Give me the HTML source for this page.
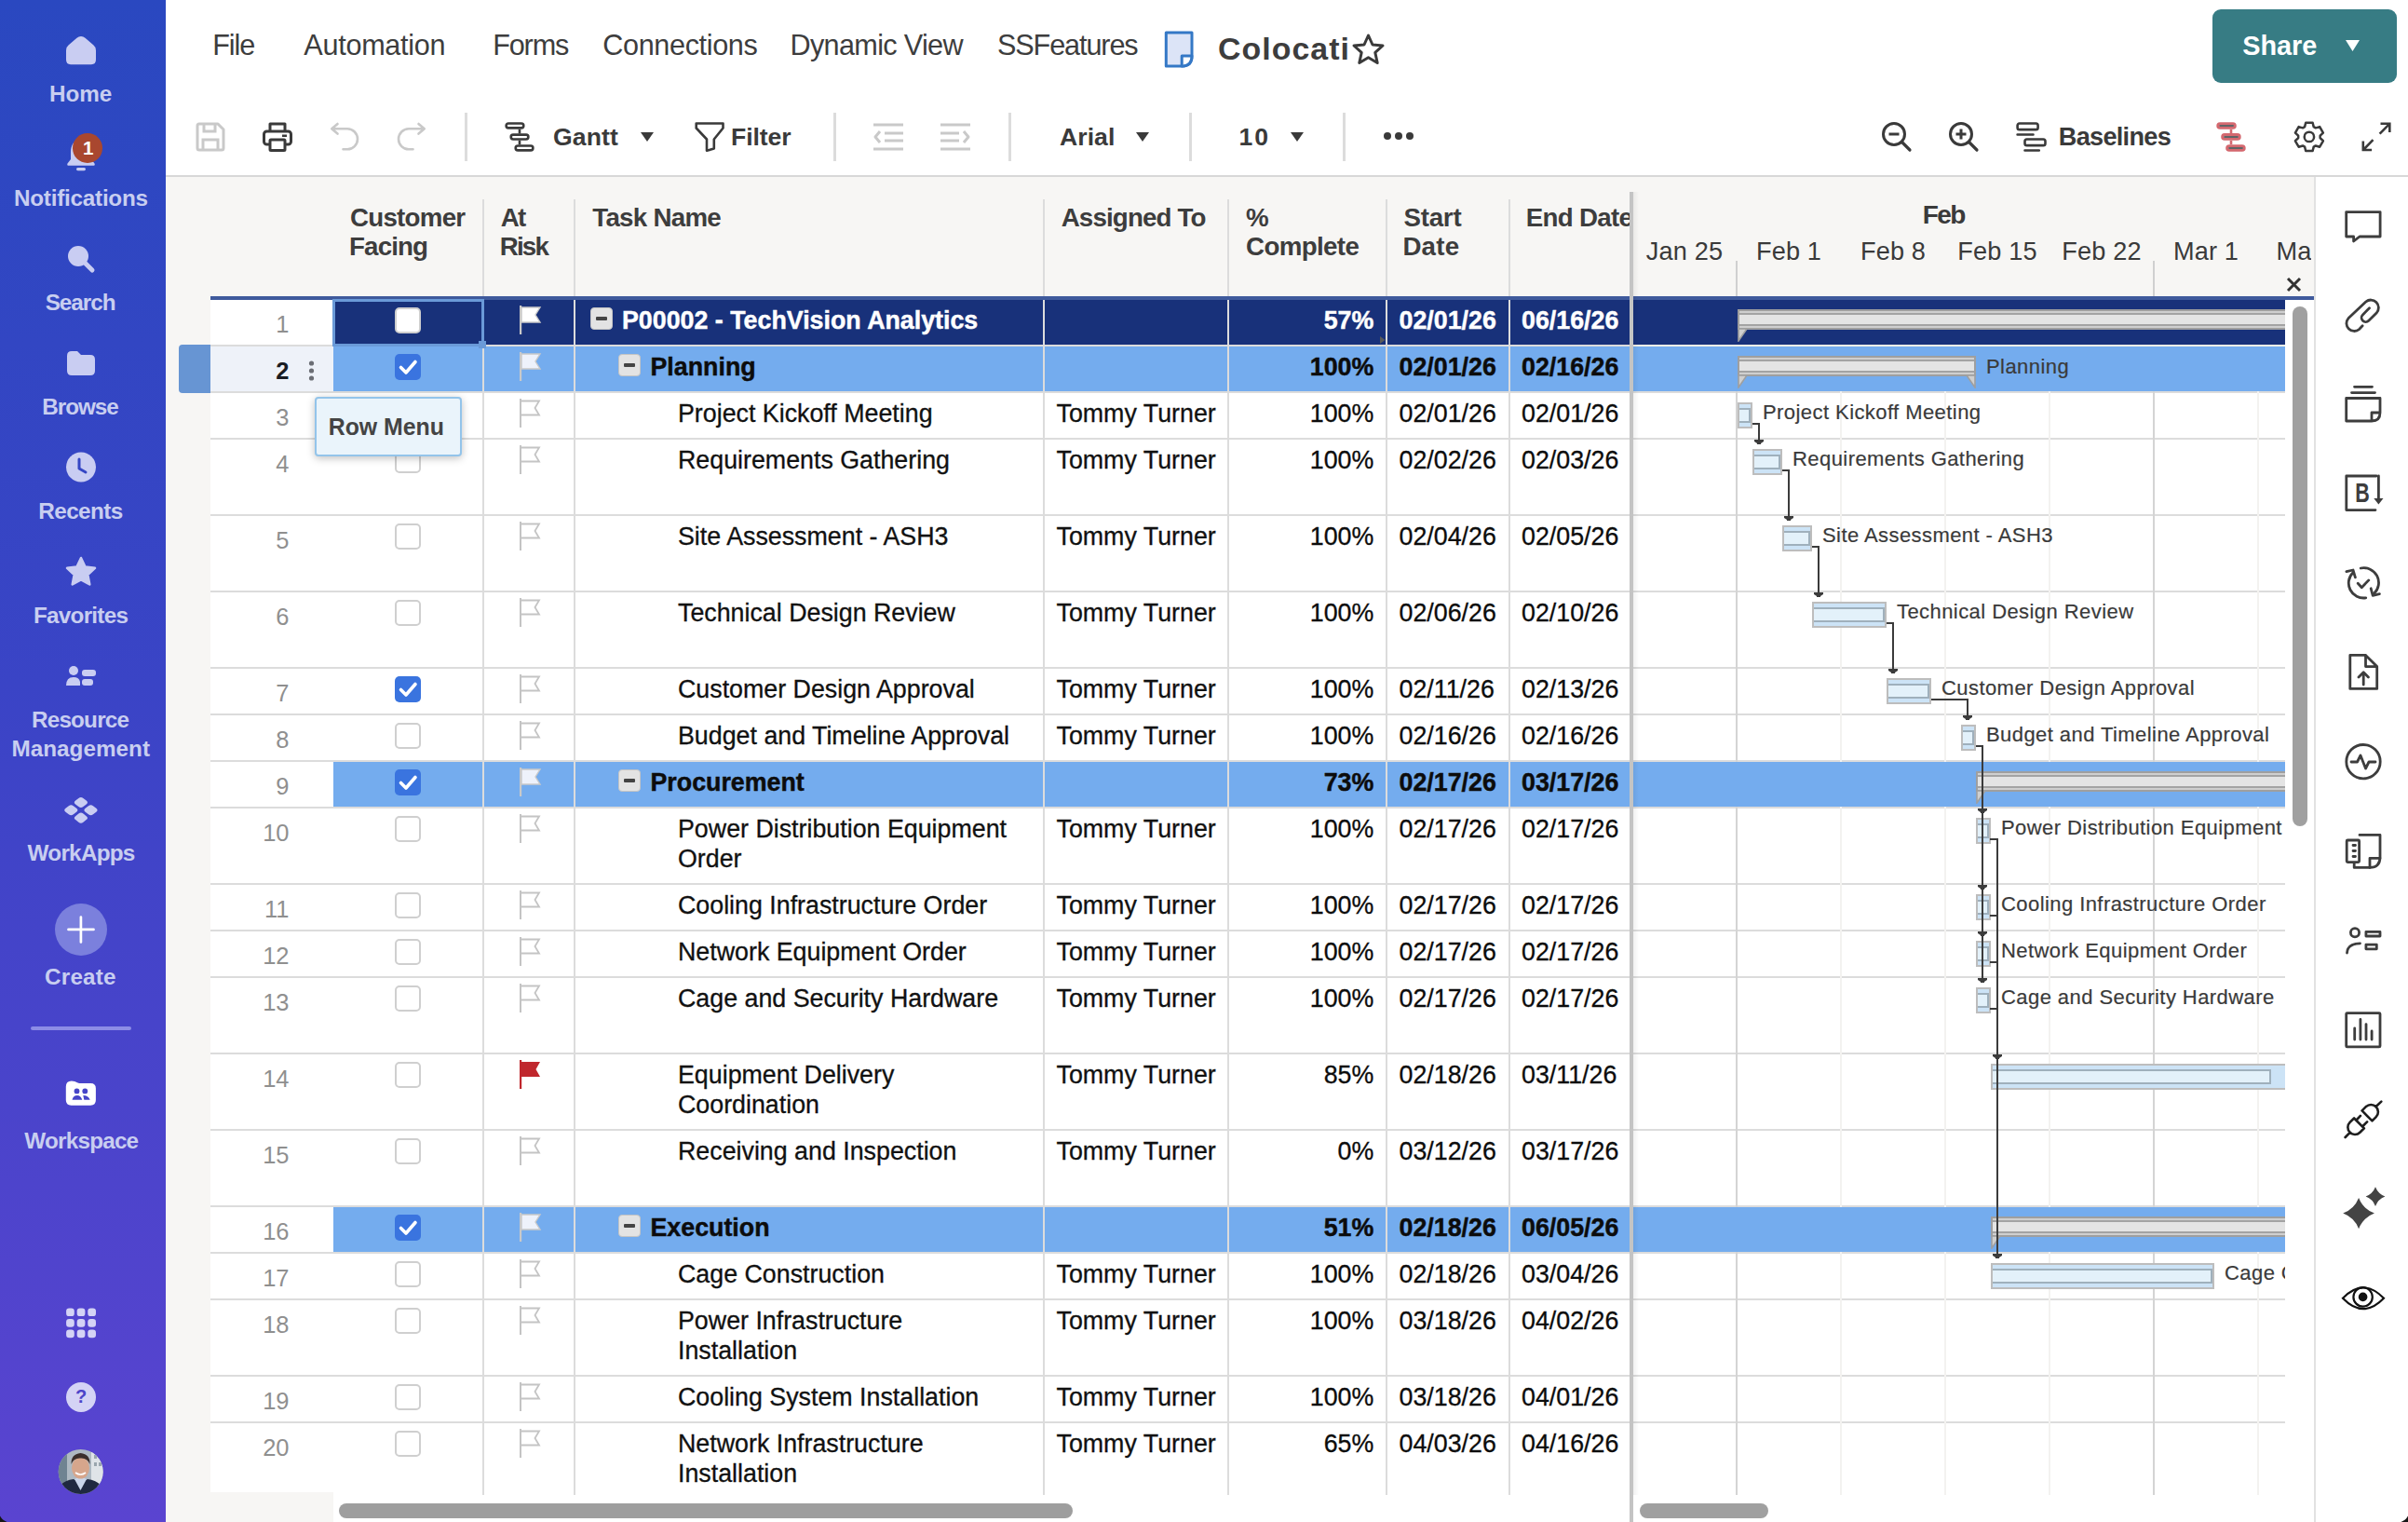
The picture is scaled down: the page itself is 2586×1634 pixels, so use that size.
<!DOCTYPE html><html><head><meta charset="utf-8"><style>
*{box-sizing:border-box;margin:0;padding:0}
html,body{width:2586px;height:1634px;overflow:hidden;background:#fff;font-family:"Liberation Sans", sans-serif;}
.a{position:absolute}
.t{position:absolute;white-space:nowrap;line-height:1}
.sb{position:absolute;left:0;width:178px;text-align:center;color:#c9cdf2;font-weight:bold;font-size:23px;line-height:31px}
.mn{position:absolute;top:34px;font-size:28px;color:#3a3a3a;white-space:nowrap;line-height:32px}
.tb{position:absolute;top:130px}
.sep{position:absolute;top:121px;width:3px;height:52px;background:#dcdcdc}
.hd{position:absolute;top:216px;font-size:26px;font-weight:bold;color:#3d3d3d;line-height:31px;white-space:nowrap}
.vl{position:absolute;width:2px;background:#dcdcdc}
.cell{-webkit-text-stroke:0.3px currentColor;position:absolute;font-size:26.8px;line-height:32px;white-space:nowrap;color:#111}
.rn{position:absolute;font-size:25.5px;color:#8f8f8f;text-align:right;width:80px;left:230.5px;line-height:30px}
.cb{position:absolute;left:424px;width:28px;height:28px;border:2px solid #cfcfcf;border-radius:5px;background:#fff}
.cbc{position:absolute;left:424px;width:28px;height:28px;border-radius:5px;background:#3a74df}
.tg{position:absolute;width:24px;height:24px;background:#e3e3e3;border:1.5px solid #c4c4c4;border-radius:4px}
.tg:after{content:"";position:absolute;left:4.5px;top:8.5px;width:12px;height:4px;background:#444;border-radius:1px}
.gl{-webkit-text-stroke:0.2px currentColor;position:absolute;font-size:22px;letter-spacing:0.43px;color:#3a3a3a;white-space:nowrap;line-height:26px}
.ri{position:absolute;left:2518px}

</style></head><body>
<div class="a" style="left:0;top:0;width:178px;height:1634px;background:linear-gradient(180deg,#2a48c0 0%,#3a44c6 45%,#5a44d0 100%)"></div>
<svg class="a" style="left:0;top:0" width="178" height="200" viewBox="0 0 178 200"><path d="M87 39 Q89.5 39 91.5 40.8 L100.5 48.5 Q103 50.5 103 54 V64 Q103 69.2 98 69.2 H76 Q71 69.2 71 64 V54 Q71 50.5 73.5 48.5 L82.5 40.8 Q84.5 39 87 39Z" fill="#c9cdf2"/><path d="M87 150 C79 150 76 156 76 164 V171 L72.5 175.5 Q71.5 177.8 74 177.8 H100 Q102.5 177.8 101.5 175.5 L98 171 V164 C98 156 95 150 87 150Z" fill="#c9cdf2"/><rect x="82" y="180" width="10" height="3.2" rx="1.6" fill="#c9cdf2"/></svg>
<div class="t" style="left:52.95px;top:89.1px;font-size:24.29px;line-height:24.29px;letter-spacing:-0.017px;font-weight:700;color:#c8cef0;">Home</div>
<div class="a" style="left:78.1px;top:143px;width:31.6px;height:31.6px;border-radius:50%;background:#a9472f"></div>
<div class="t" style="left:89.0px;top:148.6px;font-size:20.58px;line-height:20.58px;letter-spacing:-2.7px;font-weight:700;color:#fff;">1</div>
<div class="t" style="left:15.0px;top:201.0px;font-size:24.29px;line-height:24.29px;letter-spacing:-0.25px;font-weight:700;color:#c8cef0;">Notifications</div>
<svg class="a" style="left:71px;top:262px" width="32" height="32" viewBox="0 0 32 32"><circle cx="13" cy="13" r="11" fill="#c9cdf2"/><line x1="20" y1="20" x2="28" y2="28" stroke="#c9cdf2" stroke-width="5" stroke-linecap="round"/></svg>
<div class="t" style="left:48.7px;top:313.0px;font-size:24.29px;line-height:24.29px;letter-spacing:-1.02px;font-weight:700;color:#c8cef0;">Search</div>
<svg class="a" style="left:70px;top:376px" width="34" height="28" viewBox="0 0 34 28"><path d="M2 6 Q2 1 7 1 L13 1 L17 5 L27 5 Q32 5 32 10 L32 22 Q32 27 27 27 L7 27 Q2 27 2 22Z" fill="#c9cdf2"/></svg>
<div class="t" style="left:45.3px;top:425.0px;font-size:24.29px;line-height:24.29px;letter-spacing:-1.06px;font-weight:700;color:#c8cef0;">Browse</div>
<svg class="a" style="left:70px;top:484px" width="34" height="35" viewBox="0 0 34 35"><circle cx="17" cy="17.5" r="16" fill="#c9cdf2"/><path d="M15 9 L15 19 L22 23" stroke="#3546c4" stroke-width="3" fill="none" stroke-linecap="round" stroke-linejoin="round"/></svg>
<div class="t" style="left:41.3px;top:537.2px;font-size:24.29px;line-height:24.29px;letter-spacing:-0.583px;font-weight:700;color:#c8cef0;">Recents</div>
<svg class="a" style="left:70px;top:597px" width="34" height="34" viewBox="0 0 34 34"><path d="M17 2 L21.5 11.5 L32 12.8 L24.3 20 L26.3 30.5 L17 25.4 L7.7 30.5 L9.7 20 L2 12.8 L12.5 11.5Z" fill="#c9cdf2" stroke="#c9cdf2" stroke-width="2.5" stroke-linejoin="round"/></svg>
<div class="t" style="left:36.0px;top:649.0px;font-size:24.29px;line-height:24.29px;letter-spacing:-0.75px;font-weight:700;color:#c8cef0;">Favorites</div>
<svg class="a" style="left:70px;top:714px" width="34" height="24" viewBox="0 0 34 24"><circle cx="9" cy="6" r="5" fill="#c9cdf2"/><path d="M1 22 Q1 13 9 13 Q15 13 16 18 L16 22Z" fill="#c9cdf2"/><rect x="18" y="5" width="15" height="7" rx="3" fill="#c9cdf2"/><rect x="18" y="15" width="12" height="7" rx="3" fill="#c9cdf2"/></svg>
<div class="t" style="left:34.0px;top:761.0px;font-size:24.29px;line-height:24.29px;letter-spacing:-0.814px;font-weight:700;color:#c8cef0;">Resource</div>
<div class="t" style="left:12.4px;top:792.0px;font-size:24.29px;line-height:24.29px;letter-spacing:0.022px;font-weight:700;color:#c8cef0;">Management</div>
<svg class="a" style="left:0;top:800px" width="178" height="120" viewBox="0 800 178 120"><g fill="#c9cdf2"><g transform="translate(86.9 861.5) scale(1.18 0.92) rotate(45)"><rect x="-5" y="-5" width="10" height="10" rx="3"/></g><g transform="translate(76.3 869.8) scale(1.18 0.92) rotate(45)"><rect x="-5" y="-5" width="10" height="10" rx="3"/></g><g transform="translate(97.5 869.8) scale(1.18 0.92) rotate(45)"><rect x="-5" y="-5" width="10" height="10" rx="3"/></g><g transform="translate(86.9 878.1) scale(1.18 0.92) rotate(45)"><rect x="-5" y="-5" width="10" height="10" rx="3"/></g></g></svg>
<div class="t" style="left:29.6px;top:903.6px;font-size:24.29px;line-height:24.29px;letter-spacing:-0.743px;font-weight:700;color:#c8cef0;">WorkApps</div>
<div class="a" style="left:59px;top:970px;width:56px;height:56px;border-radius:50%;background:#7b80dd"></div>
<svg class="a" style="left:71px;top:982px" width="32" height="32" viewBox="0 0 32 32"><path d="M15.9 2.5 V29.5 M2.5 15.9 H29.5" stroke="#fff" stroke-width="2.7" stroke-linecap="round"/></svg>
<div class="t" style="left:48.0px;top:1036.5px;font-size:24.29px;line-height:24.29px;letter-spacing:0.2px;font-weight:700;color:#c8cef0;">Create</div>
<div class="a" style="left:33px;top:1102px;width:108px;height:4px;border-radius:2px;background:#8d8de6"></div>
<svg class="a" style="left:0;top:1140px" width="178" height="60" viewBox="0 1140 178 60"><path d="M70.8 1166.5 Q70.8 1160.4 76.8 1160.4 Q80.5 1160.4 83 1162.2 Q84 1163 85.5 1163 H97.4 Q102.9 1163 102.9 1168.5 V1181 Q102.9 1186.7 97.2 1186.7 H76.5 Q70.8 1186.7 70.8 1181Z" fill="#ffffff"/><g fill="#4645c8"><circle cx="82.5" cy="1171.4" r="2.9"/><circle cx="91.3" cy="1171.4" r="2.9"/><path d="M77.5 1180.8 Q78.5 1176 83 1176 Q86.7 1176 88.3 1180.8Z M89.3 1176 Q95 1176 96.7 1180.8 H90.3Z"/></g></svg>
<div class="t" style="left:26.3px;top:1212.6px;font-size:24.29px;line-height:24.29px;letter-spacing:-0.787px;font-weight:700;color:#c8cef0;">Workspace</div>
<svg class="a" style="left:0;top:1380px" width="178" height="80" viewBox="0 1380 178 80"><rect x="71.1" y="1404.4" width="8.7" height="8.7" rx="3.2" fill="#d4d3f5"/><rect x="71.1" y="1416.0" width="8.7" height="8.7" rx="3.2" fill="#d4d3f5"/><rect x="71.1" y="1427.6000000000001" width="8.7" height="8.7" rx="3.2" fill="#d4d3f5"/><rect x="82.69999999999999" y="1404.4" width="8.7" height="8.7" rx="3.2" fill="#d4d3f5"/><rect x="82.69999999999999" y="1416.0" width="8.7" height="8.7" rx="3.2" fill="#d4d3f5"/><rect x="82.69999999999999" y="1427.6000000000001" width="8.7" height="8.7" rx="3.2" fill="#d4d3f5"/><rect x="94.3" y="1404.4" width="8.7" height="8.7" rx="3.2" fill="#d4d3f5"/><rect x="94.3" y="1416.0" width="8.7" height="8.7" rx="3.2" fill="#d4d3f5"/><rect x="94.3" y="1427.6000000000001" width="8.7" height="8.7" rx="3.2" fill="#d4d3f5"/></svg>
<div class="a" style="left:71px;top:1484px;width:32px;height:32px;border-radius:50%;background:#d4d3f5"></div>
<div class="t" style="left:71px;top:1489px;width:32px;text-align:center;font-size:20px;font-weight:bold;color:#4c44c9">?</div>
<svg class="a" style="left:0;top:1540px" width="178" height="80" viewBox="0 1540 178 80"><defs><clipPath id="av"><circle cx="86.7" cy="1580" r="24"/></clipPath></defs><g clip-path="url(#av)"><rect x="60" y="1554" width="54" height="54" fill="#aeb9c2"/><rect x="60" y="1554" width="12" height="54" fill="#6f8391"/><rect x="98" y="1556" width="16" height="40" fill="#dfe4e8"/><rect x="101" y="1562" width="3" height="4" fill="#9aa6ae"/><rect x="106" y="1562" width="3" height="4" fill="#9aa6ae"/><rect x="101" y="1570" width="3" height="4" fill="#9aa6ae"/><rect x="106" y="1570" width="3" height="4" fill="#9aa6ae"/><path d="M60 1606 L64 1595 Q70 1589 79 1588 L86.5 1592 L94 1588 Q103 1589 109 1595 L114 1606Z" fill="#1f2940"/><path d="M80 1588 L86.5 1600 L93 1588 L86.5 1585Z" fill="#c9d6ea"/><ellipse cx="86.5" cy="1576" rx="9.5" ry="11.5" fill="#d6a68c"/><path d="M76.5 1572 Q76 1561 86.5 1560 Q97 1561 96.5 1572 Q94 1565 86.5 1565.5 Q79 1565 76.5 1572Z" fill="#3b2f2b"/><path d="M81 1581 Q86.5 1585 92 1581" stroke="#fff" stroke-width="1.6" fill="none"/></g></svg>
<div class="t" style="left:228.2px;top:32.8px;font-size:30.61px;line-height:30.61px;letter-spacing:-1.1px;font-weight:400;color:#3d3d3d;">File</div>
<div class="t" style="left:326.3px;top:32.8px;font-size:30.61px;line-height:30.61px;letter-spacing:-0.278px;font-weight:400;color:#3d3d3d;">Automation</div>
<div class="t" style="left:529.2px;top:32.8px;font-size:30.61px;line-height:30.61px;letter-spacing:-1.15px;font-weight:400;color:#3d3d3d;">Forms</div>
<div class="t" style="left:647.3px;top:32.8px;font-size:30.61px;line-height:30.61px;letter-spacing:-0.37px;font-weight:400;color:#3d3d3d;">Connections</div>
<div class="t" style="left:848.5px;top:32.8px;font-size:30.61px;line-height:30.61px;letter-spacing:-0.664px;font-weight:400;color:#3d3d3d;">Dynamic View</div>
<div class="t" style="left:1071.0px;top:32.8px;font-size:30.61px;line-height:30.61px;letter-spacing:-1.111px;font-weight:400;color:#3d3d3d;">SSFeatures</div>
<svg class="a" style="left:1240px;top:25px" width="60" height="55" viewBox="1240 25 60 55"><path d="M1252.3 35 H1280 V60 Q1280 71 1269.2 71 H1252.3Z" fill="#dce4f7" stroke="#3478c6" stroke-width="3" stroke-linejoin="round"/><path d="M1269.2 71 V60 H1280 Q1280 71 1269.2 71Z" fill="#fff" stroke="#3478c6" stroke-width="3" stroke-linejoin="round"/></svg>
<div class="t" style="left:1308.1px;top:35.7px;font-size:33.87px;line-height:33.87px;letter-spacing:1.029px;font-weight:700;color:#3d3d3d;">Colocati</div>
<svg class="a" style="left:1451px;top:35px" width="37" height="36" viewBox="0 0 37 36"><path d="M18.5 3 L23 13 L34 14 L25.8 21.4 L28.2 32.5 L18.5 26.8 L8.8 32.5 L11.2 21.4 L3 14 L14 13Z" fill="none" stroke="#3a3a3a" stroke-width="3" stroke-linejoin="round"/></svg>
<div class="a" style="left:2376px;top:10px;width:198px;height:79px;border-radius:9px;background:#377c84"></div>
<div class="t" style="left:2408.2px;top:35.0px;font-size:28.86px;line-height:28.86px;letter-spacing:-0.05px;font-weight:700;color:#fff;">Share</div>
<svg class="a" style="left:2519px;top:43px" width="15" height="13" viewBox="0 0 15 13"><path d="M0 0 H15 L7.5 12Z" fill="#fff"/></svg>
<svg class="a" style="left:209px;top:130px" width="34" height="34" viewBox="0 0 34 34"><path d="M3 5 Q3 3 5 3 L25 3 L31 9 L31 29 Q31 31 29 31 L5 31 Q3 31 3 29Z" fill="none" stroke="#c9c9c9" stroke-width="3" stroke-linejoin="round"/><path d="M10 3 V11 H22 V3" fill="none" stroke="#c9c9c9" stroke-width="3"/><path d="M9 31 V20 H25 V31" fill="none" stroke="#c9c9c9" stroke-width="3"/></svg>
<svg class="a" style="left:281px;top:130px" width="34" height="34" viewBox="0 0 34 34"><path d="M9 11 V3 H25 V11" fill="none" stroke="#3a3a3a" stroke-width="3" stroke-linejoin="round"/><rect x="2.5" y="11" width="29" height="14" rx="3" fill="none" stroke="#3a3a3a" stroke-width="3"/><rect x="9" y="20" width="16" height="11.5" rx="1" fill="#fff" stroke="#3a3a3a" stroke-width="3"/><rect x="22" y="14.5" width="5" height="2.5" fill="#3a3a3a"/></svg>
<svg class="a" style="left:353px;top:130px" width="34" height="34" viewBox="0 0 34 34"><path d="M9.5 3 L3.3 8.3 L9.5 13.6 M3.3 8.3 H20 A11 11 0 0 1 20 30.3 H15.5" fill="none" stroke="#c9c9c9" stroke-width="2.6" stroke-linecap="round" stroke-linejoin="round"/></svg>
<svg class="a" style="left:425px;top:130px" width="34" height="34" viewBox="0 0 34 34"><path d="M24.5 3 L30.7 8.3 L24.5 13.6 M30.7 8.3 H14 A11 11 0 0 0 14 30.3 H18.5" fill="none" stroke="#c9c9c9" stroke-width="2.6" stroke-linecap="round" stroke-linejoin="round"/></svg>
<div class="sep" style="left:499px"></div>
<svg class="a" style="left:541px;top:130px" width="34" height="34" viewBox="0 0 34 34"><g fill="none" stroke="#3a3a3a" stroke-width="2.6"><rect x="2.6" y="2.5" width="18.7" height="4.9" rx="2.4"/><rect x="7.7" y="14.6" width="18.7" height="4.9" rx="2.4"/><rect x="12.7" y="26.5" width="18.7" height="4.9" rx="2.4"/><path d="M17 8.8 V13.4 M17 20.8 V25.3"/></g></svg>
<div class="t" style="left:594.0px;top:133.6px;font-size:26.58px;line-height:26.58px;letter-spacing:0.125px;font-weight:700;color:#3a3a3a;">Gantt</div>
<svg class="a" style="left:688px;top:142px" width="14" height="10" viewBox="0 0 14 10"><path d="M0 0 H14 L7 10Z" fill="#3a3a3a"/></svg>
<svg class="a" style="left:744px;top:130px" width="36" height="34" viewBox="0 0 36 34"><path d="M3.7 2.5 H32.5 V7.5 L22.8 19.5 V29.5 L15 31.7 V19.5 L3.7 7.5Z" fill="none" stroke="#3a3a3a" stroke-width="2.6" stroke-linejoin="round"/></svg>
<div class="t" style="left:785.0px;top:133.6px;font-size:26.58px;line-height:26.58px;letter-spacing:-0.1px;font-weight:700;color:#3a3a3a;">Filter</div>
<div class="sep" style="left:895px"></div>
<svg class="a" style="left:937px;top:132px" width="34" height="30" viewBox="0 0 34 30"><path d="M1 2 H33 M13 11 H33 M13 19 H33 M1 28 H33" stroke="#c9c9c9" stroke-width="3"/><path d="M8 9 L3 15 L8 21" fill="none" stroke="#c9c9c9" stroke-width="3" stroke-linejoin="round"/></svg>
<svg class="a" style="left:1009px;top:132px" width="34" height="30" viewBox="0 0 34 30"><path d="M1 2 H33 M1 11 H21 M1 19 H21 M1 28 H33" stroke="#c9c9c9" stroke-width="3"/><path d="M26 9 L31 15 L26 21" fill="none" stroke="#c9c9c9" stroke-width="3" stroke-linejoin="round"/></svg>
<div class="sep" style="left:1083px"></div>
<div class="t" style="left:1137.9px;top:133.6px;font-size:26.58px;line-height:26.58px;letter-spacing:0.1px;font-weight:700;color:#3a3a3a;">Arial</div>
<svg class="a" style="left:1220px;top:142px" width="14" height="10" viewBox="0 0 14 10"><path d="M0 0 H14 L7 10Z" fill="#3a3a3a"/></svg>
<div class="sep" style="left:1277px"></div>
<div class="t" style="left:1330.6px;top:133.6px;font-size:26.58px;line-height:26.58px;letter-spacing:1.9px;font-weight:700;color:#3a3a3a;">10</div>
<svg class="a" style="left:1386px;top:142px" width="14" height="10" viewBox="0 0 14 10"><path d="M0 0 H14 L7 10Z" fill="#3a3a3a"/></svg>
<div class="sep" style="left:1442px"></div>
<svg class="a" style="left:1485px;top:141px" width="34" height="10" viewBox="0 0 34 10"><circle cx="5" cy="5" r="4" fill="#3a3a3a"/><circle cx="17" cy="5" r="4" fill="#3a3a3a"/><circle cx="29" cy="5" r="4" fill="#3a3a3a"/></svg>
<svg class="a" style="left:2020px;top:130px" width="34" height="34" viewBox="0 0 34 34"><circle cx="14" cy="14" r="11.5" fill="none" stroke="#3a3a3a" stroke-width="3"/><path d="M22.5 22.5 L31 31" stroke="#3a3a3a" stroke-width="3.2" stroke-linecap="round"/><path d="M8.5 14 H19.5" stroke="#3a3a3a" stroke-width="3"/></svg>
<svg class="a" style="left:2092px;top:130px" width="34" height="34" viewBox="0 0 34 34"><circle cx="14" cy="14" r="11.5" fill="none" stroke="#3a3a3a" stroke-width="3"/><path d="M22.5 22.5 L31 31" stroke="#3a3a3a" stroke-width="3.2" stroke-linecap="round"/><path d="M8.5 14 H19.5 M14 8.5 V19.5" stroke="#3a3a3a" stroke-width="3"/></svg>
<svg class="a" style="left:2164px;top:130px" width="34" height="34" viewBox="0 0 34 34"><g fill="none" stroke="#3a3a3a" stroke-width="2.6" stroke-linecap="round"><rect x="2.6" y="2.5" width="22" height="6.6" rx="2.2"/><path d="M2.6 14.5 H19.5 M10.5 31.5 H25.8"/><rect x="10.5" y="19.5" width="22" height="6.6" rx="2.2"/></g></svg>
<div class="t" style="left:2210.8px;top:133.3px;font-size:27.14px;line-height:27.14px;letter-spacing:-0.713px;font-weight:700;color:#3a3a3a;">Baselines</div>
<svg class="a" style="left:0;top:0" width="2586" height="200" viewBox="0 0 2586 200"><g fill="none" stroke="#d4686f" stroke-width="3.2"><rect x="2381.9" y="132.8" width="18.3" height="4.4" rx="2.2"/><rect x="2386.8" y="144.7" width="18.3" height="4.4" rx="2.2"/><rect x="2391.8" y="156.8" width="18.3" height="4.4" rx="2.2"/><path d="M2396 139 V143 M2396 151 V155" stroke-width="2.6"/></g><path d="M2383.5 135 H2398.8 M2388.4 146.9 H2403.7 M2393.4 159 H2408.7" stroke="#5f6366" stroke-width="2"/></svg>
<svg class="a" style="left:0;top:0" width="2586" height="200" viewBox="0 0 2586 200"><path d="M2475.09 136.13 L2476.19 131.75 L2483.61 131.75 L2484.71 136.13 L2486.83 137.35 L2491.17 136.11 L2494.88 142.53 L2491.64 145.68 L2491.64 148.12 L2494.88 151.27 L2491.17 157.69 L2486.83 156.45 L2484.71 157.67 L2483.61 162.05 L2476.19 162.05 L2475.09 157.67 L2472.97 156.45 L2468.63 157.69 L2464.92 151.27 L2468.16 148.12 L2468.16 145.68 L2464.92 142.53 L2468.63 136.11 L2472.97 137.35Z" fill="none" stroke="#3a3a3a" stroke-width="2.5" stroke-linejoin="round"/><circle cx="2479.9" cy="146.9" r="5.2" fill="none" stroke="#3a3a3a" stroke-width="2.5"/></svg>
<svg class="a" style="left:0;top:0" width="2586" height="200" viewBox="0 0 2586 200"><path d="M2556.5 132.8 H2566.3 V142 M2566.3 132.8 L2555.6 143.6 M2537.8 151.4 V161 H2547.1 M2537.8 161 L2548.5 150.2" fill="none" stroke="#3a3a3a" stroke-width="2.6" stroke-linejoin="miter"/></svg>
<div class="a" style="left:178px;top:188px;width:2408px;height:2px;background:#d8d8d8"></div>
<div class="a" style="left:178px;top:190px;width:2307px;height:128px;background:#f7f6f4"></div>
<div class="a" style="left:178px;top:318px;width:48px;height:1316px;background:#f7f6f4"></div>
<div class="vl" style="left:518px;top:214px;height:104px"></div>
<div class="vl" style="left:616px;top:214px;height:104px"></div>
<div class="vl" style="left:1120px;top:214px;height:104px"></div>
<div class="vl" style="left:1318px;top:214px;height:104px"></div>
<div class="vl" style="left:1488px;top:214px;height:104px"></div>
<div class="vl" style="left:1620px;top:214px;height:104px"></div>
<div class="t" style="left:376.0px;top:219.8px;font-size:27.72px;line-height:27.72px;letter-spacing:-0.757px;font-weight:700;color:#3d3d3d;">Customer</div>
<div class="t" style="left:375.0px;top:251.0px;font-size:27.72px;line-height:27.72px;letter-spacing:-0.86px;font-weight:700;color:#3d3d3d;">Facing</div>
<div class="t" style="left:537.7px;top:219.8px;font-size:27.72px;line-height:27.72px;letter-spacing:-1.7px;font-weight:700;color:#3d3d3d;">At</div>
<div class="t" style="left:536.7px;top:251.0px;font-size:27.72px;line-height:27.72px;letter-spacing:-1.767px;font-weight:700;color:#3d3d3d;">Risk</div>
<div class="t" style="left:636.3px;top:219.8px;font-size:27.72px;line-height:27.72px;letter-spacing:-0.737px;font-weight:700;color:#3d3d3d;">Task Name</div>
<div class="t" style="left:1139.7px;top:219.8px;font-size:27.72px;line-height:27.72px;letter-spacing:-0.85px;font-weight:700;color:#3d3d3d;">Assigned To</div>
<div class="t" style="left:1338.0px;top:219.8px;font-size:27.72px;line-height:27.72px;letter-spacing:-4.0px;font-weight:700;color:#3d3d3d;">%</div>
<div class="t" style="left:1338.0px;top:251.0px;font-size:27.72px;line-height:27.72px;letter-spacing:-0.629px;font-weight:700;color:#3d3d3d;">Complete</div>
<div class="t" style="left:1507.4px;top:219.8px;font-size:27.72px;line-height:27.72px;letter-spacing:-0.225px;font-weight:700;color:#3d3d3d;">Start</div>
<div class="t" style="left:1506.4px;top:251.0px;font-size:27.72px;line-height:27.72px;letter-spacing:0.2px;font-weight:700;color:#3d3d3d;">Date</div>
<div class="t" style="left:1638.7px;top:219.8px;font-size:27.72px;line-height:27.72px;letter-spacing:-0.7px;font-weight:700;color:#3d3d3d;width:111.29999999999995px;overflow:hidden">End Date</div>
<div class="a" style="left:226px;top:318px;width:2228px;height:4px;background:#3f5a9c"></div>
<div class="a" style="left:2454px;top:318px;width:31px;height:4px;background:#3f5a9c"></div>
<div class="a" style="left:226px;top:322px;width:2228px;height:1283px;background:#fff"></div>
<div class="a" style="left:358px;top:322px;width:1393px;height:48px;background:#18317a"></div>
<div class="a" style="left:1754px;top:322px;width:700px;height:48px;background:#18317a"></div>
<div class="a" style="left:226px;top:370px;width:2228px;height:2px;background:#dcdcdc"></div>
<div class="rn" style="top:333px">1</div>
<div class="cb" style="top:330px"></div>
<svg class="a" style="left:557px;top:328px" width="25" height="31" viewBox="0 0 25 31"><rect x="1" y="0" width="2.2" height="31" fill="#c9c9c9"/><path d="M3 2 H23 L18 10 L23 18 H3Z" fill="#ffffff" stroke="#c9c9c9" stroke-width="1.4"/></svg>
<div class="tg" style="left:634px;top:330px"></div>
<div class="cell" style="left:668px;top:328px;color:#fff;font-weight:bold;-webkit-text-stroke:0.45px currentColor;">P00002 - TechVision Analytics</div>
<div class="cell" style="left:1319px;width:156.3px;text-align:right;top:328px;color:#fff;font-weight:bold;-webkit-text-stroke:0.45px currentColor;">57%</div>
<div class="cell" style="left:1502.5px;top:328px;color:#fff;font-weight:bold;-webkit-text-stroke:0.45px currentColor;">02/01/26</div>
<div class="cell" style="left:1634px;top:328px;color:#fff;font-weight:bold;-webkit-text-stroke:0.45px currentColor;">06/16/26</div>
<div class="a" style="left:358px;top:372px;width:1393px;height:48px;background:#74acee"></div>
<div class="a" style="left:1754px;top:372px;width:700px;height:48px;background:#74acee"></div>
<div class="a" style="left:226px;top:420px;width:2228px;height:2px;background:#dcdcdc"></div>
<div class="a" style="left:192px;top:370px;width:34px;height:52px;border-radius:4px 0 0 4px;background:#6795d3"></div>
<div class="a" style="left:226px;top:372px;width:132px;height:48px;background:#eef2f9"></div>
<div class="rn" style="top:383px;color:#1a1d24;font-weight:bold">2</div>
<svg class="a" style="left:331px;top:387px" width="7" height="22" viewBox="0 0 7 22"><circle cx="3.5" cy="3" r="2.6" fill="#6b6e75"/><circle cx="3.5" cy="11" r="2.6" fill="#6b6e75"/><circle cx="3.5" cy="19" r="2.6" fill="#6b6e75"/></svg>
<div class="cbc" style="top:380px"></div>
<svg class="a" style="left:424px;top:380px" width="28" height="28" viewBox="0 0 28 28"><path d="M6.5 14.5 L12 20 L22 8.5" fill="none" stroke="#fff" stroke-width="3.6" stroke-linecap="round" stroke-linejoin="round"/></svg>
<svg class="a" style="left:557px;top:378px" width="25" height="31" viewBox="0 0 25 31"><rect x="1" y="0" width="2.2" height="31" fill="#c9c9c9"/><path d="M3 2 H23 L18 10 L23 18 H3Z" fill="#eef2fb" stroke="#c9c9c9" stroke-width="1.4"/></svg>
<div class="tg" style="left:664px;top:380px"></div>
<div class="cell" style="left:698.5px;top:378px;color:#0c0c0c;font-weight:bold;-webkit-text-stroke:0.45px currentColor;">Planning</div>
<div class="cell" style="left:1319px;width:156.3px;text-align:right;top:378px;color:#0c0c0c;font-weight:bold;-webkit-text-stroke:0.45px currentColor;">100%</div>
<div class="cell" style="left:1502.5px;top:378px;color:#0c0c0c;font-weight:bold;-webkit-text-stroke:0.45px currentColor;">02/01/26</div>
<div class="cell" style="left:1634px;top:378px;color:#0c0c0c;font-weight:bold;-webkit-text-stroke:0.45px currentColor;">02/16/26</div>
<div class="a" style="left:226px;top:470px;width:2228px;height:2px;background:#dcdcdc"></div>
<div class="rn" style="top:433px">3</div>
<div class="cb" style="top:430px"></div>
<svg class="a" style="left:557px;top:428px" width="25" height="31" viewBox="0 0 25 31"><rect x="1" y="0" width="2" height="31" fill="#c4c4c4"/><path d="M3 2.5 H22 L17.5 10 L22 17.5 H3" fill="none" stroke="#c4c4c4" stroke-width="1.8" stroke-linejoin="miter"/></svg>
<div class="cell" style="left:728px;top:428px;color:#111;font-weight:normal;">Project Kickoff Meeting</div>
<div class="cell" style="left:1134.5px;top:428px">Tommy Turner</div>
<div class="cell" style="left:1319px;width:156.3px;text-align:right;top:428px;color:#0c0c0c;font-weight:normal;">100%</div>
<div class="cell" style="left:1502.5px;top:428px;color:#0c0c0c;font-weight:normal;">02/01/26</div>
<div class="cell" style="left:1634px;top:428px;color:#0c0c0c;font-weight:normal;">02/01/26</div>
<div class="a" style="left:226px;top:552px;width:2228px;height:2px;background:#dcdcdc"></div>
<div class="rn" style="top:483px">4</div>
<div class="cb" style="top:480px"></div>
<svg class="a" style="left:557px;top:478px" width="25" height="31" viewBox="0 0 25 31"><rect x="1" y="0" width="2" height="31" fill="#c4c4c4"/><path d="M3 2.5 H22 L17.5 10 L22 17.5 H3" fill="none" stroke="#c4c4c4" stroke-width="1.8" stroke-linejoin="miter"/></svg>
<div class="cell" style="left:728px;top:478px;color:#111;font-weight:normal;">Requirements Gathering</div>
<div class="cell" style="left:1134.5px;top:478px">Tommy Turner</div>
<div class="cell" style="left:1319px;width:156.3px;text-align:right;top:478px;color:#0c0c0c;font-weight:normal;">100%</div>
<div class="cell" style="left:1502.5px;top:478px;color:#0c0c0c;font-weight:normal;">02/02/26</div>
<div class="cell" style="left:1634px;top:478px;color:#0c0c0c;font-weight:normal;">02/03/26</div>
<div class="a" style="left:226px;top:634px;width:2228px;height:2px;background:#dcdcdc"></div>
<div class="rn" style="top:565px">5</div>
<div class="cb" style="top:562px"></div>
<svg class="a" style="left:557px;top:560px" width="25" height="31" viewBox="0 0 25 31"><rect x="1" y="0" width="2" height="31" fill="#c4c4c4"/><path d="M3 2.5 H22 L17.5 10 L22 17.5 H3" fill="none" stroke="#c4c4c4" stroke-width="1.8" stroke-linejoin="miter"/></svg>
<div class="cell" style="left:728px;top:560px;color:#111;font-weight:normal;">Site Assessment - ASH3</div>
<div class="cell" style="left:1134.5px;top:560px">Tommy Turner</div>
<div class="cell" style="left:1319px;width:156.3px;text-align:right;top:560px;color:#0c0c0c;font-weight:normal;">100%</div>
<div class="cell" style="left:1502.5px;top:560px;color:#0c0c0c;font-weight:normal;">02/04/26</div>
<div class="cell" style="left:1634px;top:560px;color:#0c0c0c;font-weight:normal;">02/05/26</div>
<div class="a" style="left:226px;top:716px;width:2228px;height:2px;background:#dcdcdc"></div>
<div class="rn" style="top:647px">6</div>
<div class="cb" style="top:644px"></div>
<svg class="a" style="left:557px;top:642px" width="25" height="31" viewBox="0 0 25 31"><rect x="1" y="0" width="2" height="31" fill="#c4c4c4"/><path d="M3 2.5 H22 L17.5 10 L22 17.5 H3" fill="none" stroke="#c4c4c4" stroke-width="1.8" stroke-linejoin="miter"/></svg>
<div class="cell" style="left:728px;top:642px;color:#111;font-weight:normal;">Technical Design Review</div>
<div class="cell" style="left:1134.5px;top:642px">Tommy Turner</div>
<div class="cell" style="left:1319px;width:156.3px;text-align:right;top:642px;color:#0c0c0c;font-weight:normal;">100%</div>
<div class="cell" style="left:1502.5px;top:642px;color:#0c0c0c;font-weight:normal;">02/06/26</div>
<div class="cell" style="left:1634px;top:642px;color:#0c0c0c;font-weight:normal;">02/10/26</div>
<div class="a" style="left:226px;top:766px;width:2228px;height:2px;background:#dcdcdc"></div>
<div class="rn" style="top:729px">7</div>
<div class="cbc" style="top:726px"></div>
<svg class="a" style="left:424px;top:726px" width="28" height="28" viewBox="0 0 28 28"><path d="M6.5 14.5 L12 20 L22 8.5" fill="none" stroke="#fff" stroke-width="3.6" stroke-linecap="round" stroke-linejoin="round"/></svg>
<svg class="a" style="left:557px;top:724px" width="25" height="31" viewBox="0 0 25 31"><rect x="1" y="0" width="2" height="31" fill="#c4c4c4"/><path d="M3 2.5 H22 L17.5 10 L22 17.5 H3" fill="none" stroke="#c4c4c4" stroke-width="1.8" stroke-linejoin="miter"/></svg>
<div class="cell" style="left:728px;top:724px;color:#111;font-weight:normal;">Customer Design Approval</div>
<div class="cell" style="left:1134.5px;top:724px">Tommy Turner</div>
<div class="cell" style="left:1319px;width:156.3px;text-align:right;top:724px;color:#0c0c0c;font-weight:normal;">100%</div>
<div class="cell" style="left:1502.5px;top:724px;color:#0c0c0c;font-weight:normal;">02/11/26</div>
<div class="cell" style="left:1634px;top:724px;color:#0c0c0c;font-weight:normal;">02/13/26</div>
<div class="a" style="left:226px;top:816px;width:2228px;height:2px;background:#dcdcdc"></div>
<div class="rn" style="top:779px">8</div>
<div class="cb" style="top:776px"></div>
<svg class="a" style="left:557px;top:774px" width="25" height="31" viewBox="0 0 25 31"><rect x="1" y="0" width="2" height="31" fill="#c4c4c4"/><path d="M3 2.5 H22 L17.5 10 L22 17.5 H3" fill="none" stroke="#c4c4c4" stroke-width="1.8" stroke-linejoin="miter"/></svg>
<div class="cell" style="left:728px;top:774px;color:#111;font-weight:normal;">Budget and Timeline Approval</div>
<div class="cell" style="left:1134.5px;top:774px">Tommy Turner</div>
<div class="cell" style="left:1319px;width:156.3px;text-align:right;top:774px;color:#0c0c0c;font-weight:normal;">100%</div>
<div class="cell" style="left:1502.5px;top:774px;color:#0c0c0c;font-weight:normal;">02/16/26</div>
<div class="cell" style="left:1634px;top:774px;color:#0c0c0c;font-weight:normal;">02/16/26</div>
<div class="a" style="left:358px;top:818px;width:1393px;height:48px;background:#74acee"></div>
<div class="a" style="left:1754px;top:818px;width:700px;height:48px;background:#74acee"></div>
<div class="a" style="left:226px;top:866px;width:2228px;height:2px;background:#dcdcdc"></div>
<div class="rn" style="top:829px">9</div>
<div class="cbc" style="top:826px"></div>
<svg class="a" style="left:424px;top:826px" width="28" height="28" viewBox="0 0 28 28"><path d="M6.5 14.5 L12 20 L22 8.5" fill="none" stroke="#fff" stroke-width="3.6" stroke-linecap="round" stroke-linejoin="round"/></svg>
<svg class="a" style="left:557px;top:824px" width="25" height="31" viewBox="0 0 25 31"><rect x="1" y="0" width="2.2" height="31" fill="#c9c9c9"/><path d="M3 2 H23 L18 10 L23 18 H3Z" fill="#eef2fb" stroke="#c9c9c9" stroke-width="1.4"/></svg>
<div class="tg" style="left:664px;top:826px"></div>
<div class="cell" style="left:698.5px;top:824px;color:#0c0c0c;font-weight:bold;-webkit-text-stroke:0.45px currentColor;">Procurement</div>
<div class="cell" style="left:1319px;width:156.3px;text-align:right;top:824px;color:#0c0c0c;font-weight:bold;-webkit-text-stroke:0.45px currentColor;">73%</div>
<div class="cell" style="left:1502.5px;top:824px;color:#0c0c0c;font-weight:bold;-webkit-text-stroke:0.45px currentColor;">02/17/26</div>
<div class="cell" style="left:1634px;top:824px;color:#0c0c0c;font-weight:bold;-webkit-text-stroke:0.45px currentColor;">03/17/26</div>
<div class="a" style="left:226px;top:948px;width:2228px;height:2px;background:#dcdcdc"></div>
<div class="rn" style="top:879px">10</div>
<div class="cb" style="top:876px"></div>
<svg class="a" style="left:557px;top:874px" width="25" height="31" viewBox="0 0 25 31"><rect x="1" y="0" width="2" height="31" fill="#c4c4c4"/><path d="M3 2.5 H22 L17.5 10 L22 17.5 H3" fill="none" stroke="#c4c4c4" stroke-width="1.8" stroke-linejoin="miter"/></svg>
<div class="cell" style="left:728px;top:874px;color:#111;font-weight:normal;">Power Distribution Equipment<br>Order</div>
<div class="cell" style="left:1134.5px;top:874px">Tommy Turner</div>
<div class="cell" style="left:1319px;width:156.3px;text-align:right;top:874px;color:#0c0c0c;font-weight:normal;">100%</div>
<div class="cell" style="left:1502.5px;top:874px;color:#0c0c0c;font-weight:normal;">02/17/26</div>
<div class="cell" style="left:1634px;top:874px;color:#0c0c0c;font-weight:normal;">02/17/26</div>
<div class="a" style="left:226px;top:998px;width:2228px;height:2px;background:#dcdcdc"></div>
<div class="rn" style="top:961px">11</div>
<div class="cb" style="top:958px"></div>
<svg class="a" style="left:557px;top:956px" width="25" height="31" viewBox="0 0 25 31"><rect x="1" y="0" width="2" height="31" fill="#c4c4c4"/><path d="M3 2.5 H22 L17.5 10 L22 17.5 H3" fill="none" stroke="#c4c4c4" stroke-width="1.8" stroke-linejoin="miter"/></svg>
<div class="cell" style="left:728px;top:956px;color:#111;font-weight:normal;">Cooling Infrastructure Order</div>
<div class="cell" style="left:1134.5px;top:956px">Tommy Turner</div>
<div class="cell" style="left:1319px;width:156.3px;text-align:right;top:956px;color:#0c0c0c;font-weight:normal;">100%</div>
<div class="cell" style="left:1502.5px;top:956px;color:#0c0c0c;font-weight:normal;">02/17/26</div>
<div class="cell" style="left:1634px;top:956px;color:#0c0c0c;font-weight:normal;">02/17/26</div>
<div class="a" style="left:226px;top:1048px;width:2228px;height:2px;background:#dcdcdc"></div>
<div class="rn" style="top:1011px">12</div>
<div class="cb" style="top:1008px"></div>
<svg class="a" style="left:557px;top:1006px" width="25" height="31" viewBox="0 0 25 31"><rect x="1" y="0" width="2" height="31" fill="#c4c4c4"/><path d="M3 2.5 H22 L17.5 10 L22 17.5 H3" fill="none" stroke="#c4c4c4" stroke-width="1.8" stroke-linejoin="miter"/></svg>
<div class="cell" style="left:728px;top:1006px;color:#111;font-weight:normal;">Network Equipment Order</div>
<div class="cell" style="left:1134.5px;top:1006px">Tommy Turner</div>
<div class="cell" style="left:1319px;width:156.3px;text-align:right;top:1006px;color:#0c0c0c;font-weight:normal;">100%</div>
<div class="cell" style="left:1502.5px;top:1006px;color:#0c0c0c;font-weight:normal;">02/17/26</div>
<div class="cell" style="left:1634px;top:1006px;color:#0c0c0c;font-weight:normal;">02/17/26</div>
<div class="a" style="left:226px;top:1130px;width:2228px;height:2px;background:#dcdcdc"></div>
<div class="rn" style="top:1061px">13</div>
<div class="cb" style="top:1058px"></div>
<svg class="a" style="left:557px;top:1056px" width="25" height="31" viewBox="0 0 25 31"><rect x="1" y="0" width="2" height="31" fill="#c4c4c4"/><path d="M3 2.5 H22 L17.5 10 L22 17.5 H3" fill="none" stroke="#c4c4c4" stroke-width="1.8" stroke-linejoin="miter"/></svg>
<div class="cell" style="left:728px;top:1056px;color:#111;font-weight:normal;">Cage and Security Hardware</div>
<div class="cell" style="left:1134.5px;top:1056px">Tommy Turner</div>
<div class="cell" style="left:1319px;width:156.3px;text-align:right;top:1056px;color:#0c0c0c;font-weight:normal;">100%</div>
<div class="cell" style="left:1502.5px;top:1056px;color:#0c0c0c;font-weight:normal;">02/17/26</div>
<div class="cell" style="left:1634px;top:1056px;color:#0c0c0c;font-weight:normal;">02/17/26</div>
<div class="a" style="left:226px;top:1212px;width:2228px;height:2px;background:#dcdcdc"></div>
<div class="rn" style="top:1143px">14</div>
<div class="cb" style="top:1140px"></div>
<svg class="a" style="left:557px;top:1138px" width="25" height="31" viewBox="0 0 25 31"><rect x="1" y="0" width="2.2" height="31" fill="#c0272d"/><path d="M3 2 H23 L18.5 10 L23 18 H3Z" fill="#c0272d"/></svg>
<div class="cell" style="left:728px;top:1138px;color:#111;font-weight:normal;">Equipment Delivery<br>Coordination</div>
<div class="cell" style="left:1134.5px;top:1138px">Tommy Turner</div>
<div class="cell" style="left:1319px;width:156.3px;text-align:right;top:1138px;color:#0c0c0c;font-weight:normal;">85%</div>
<div class="cell" style="left:1502.5px;top:1138px;color:#0c0c0c;font-weight:normal;">02/18/26</div>
<div class="cell" style="left:1634px;top:1138px;color:#0c0c0c;font-weight:normal;">03/11/26</div>
<div class="a" style="left:226px;top:1294px;width:2228px;height:2px;background:#dcdcdc"></div>
<div class="rn" style="top:1225px">15</div>
<div class="cb" style="top:1222px"></div>
<svg class="a" style="left:557px;top:1220px" width="25" height="31" viewBox="0 0 25 31"><rect x="1" y="0" width="2" height="31" fill="#c4c4c4"/><path d="M3 2.5 H22 L17.5 10 L22 17.5 H3" fill="none" stroke="#c4c4c4" stroke-width="1.8" stroke-linejoin="miter"/></svg>
<div class="cell" style="left:728px;top:1220px;color:#111;font-weight:normal;">Receiving and Inspection</div>
<div class="cell" style="left:1134.5px;top:1220px">Tommy Turner</div>
<div class="cell" style="left:1319px;width:156.3px;text-align:right;top:1220px;color:#0c0c0c;font-weight:normal;">0%</div>
<div class="cell" style="left:1502.5px;top:1220px;color:#0c0c0c;font-weight:normal;">03/12/26</div>
<div class="cell" style="left:1634px;top:1220px;color:#0c0c0c;font-weight:normal;">03/17/26</div>
<div class="a" style="left:358px;top:1296px;width:1393px;height:48px;background:#74acee"></div>
<div class="a" style="left:1754px;top:1296px;width:700px;height:48px;background:#74acee"></div>
<div class="a" style="left:226px;top:1344px;width:2228px;height:2px;background:#dcdcdc"></div>
<div class="rn" style="top:1307px">16</div>
<div class="cbc" style="top:1304px"></div>
<svg class="a" style="left:424px;top:1304px" width="28" height="28" viewBox="0 0 28 28"><path d="M6.5 14.5 L12 20 L22 8.5" fill="none" stroke="#fff" stroke-width="3.6" stroke-linecap="round" stroke-linejoin="round"/></svg>
<svg class="a" style="left:557px;top:1302px" width="25" height="31" viewBox="0 0 25 31"><rect x="1" y="0" width="2.2" height="31" fill="#c9c9c9"/><path d="M3 2 H23 L18 10 L23 18 H3Z" fill="#eef2fb" stroke="#c9c9c9" stroke-width="1.4"/></svg>
<div class="tg" style="left:664px;top:1304px"></div>
<div class="cell" style="left:698.5px;top:1302px;color:#0c0c0c;font-weight:bold;-webkit-text-stroke:0.45px currentColor;">Execution</div>
<div class="cell" style="left:1319px;width:156.3px;text-align:right;top:1302px;color:#0c0c0c;font-weight:bold;-webkit-text-stroke:0.45px currentColor;">51%</div>
<div class="cell" style="left:1502.5px;top:1302px;color:#0c0c0c;font-weight:bold;-webkit-text-stroke:0.45px currentColor;">02/18/26</div>
<div class="cell" style="left:1634px;top:1302px;color:#0c0c0c;font-weight:bold;-webkit-text-stroke:0.45px currentColor;">06/05/26</div>
<div class="a" style="left:226px;top:1394px;width:2228px;height:2px;background:#dcdcdc"></div>
<div class="rn" style="top:1357px">17</div>
<div class="cb" style="top:1354px"></div>
<svg class="a" style="left:557px;top:1352px" width="25" height="31" viewBox="0 0 25 31"><rect x="1" y="0" width="2" height="31" fill="#c4c4c4"/><path d="M3 2.5 H22 L17.5 10 L22 17.5 H3" fill="none" stroke="#c4c4c4" stroke-width="1.8" stroke-linejoin="miter"/></svg>
<div class="cell" style="left:728px;top:1352px;color:#111;font-weight:normal;">Cage Construction</div>
<div class="cell" style="left:1134.5px;top:1352px">Tommy Turner</div>
<div class="cell" style="left:1319px;width:156.3px;text-align:right;top:1352px;color:#0c0c0c;font-weight:normal;">100%</div>
<div class="cell" style="left:1502.5px;top:1352px;color:#0c0c0c;font-weight:normal;">02/18/26</div>
<div class="cell" style="left:1634px;top:1352px;color:#0c0c0c;font-weight:normal;">03/04/26</div>
<div class="a" style="left:226px;top:1476px;width:2228px;height:2px;background:#dcdcdc"></div>
<div class="rn" style="top:1407px">18</div>
<div class="cb" style="top:1404px"></div>
<svg class="a" style="left:557px;top:1402px" width="25" height="31" viewBox="0 0 25 31"><rect x="1" y="0" width="2" height="31" fill="#c4c4c4"/><path d="M3 2.5 H22 L17.5 10 L22 17.5 H3" fill="none" stroke="#c4c4c4" stroke-width="1.8" stroke-linejoin="miter"/></svg>
<div class="cell" style="left:728px;top:1402px;color:#111;font-weight:normal;">Power Infrastructure<br>Installation</div>
<div class="cell" style="left:1134.5px;top:1402px">Tommy Turner</div>
<div class="cell" style="left:1319px;width:156.3px;text-align:right;top:1402px;color:#0c0c0c;font-weight:normal;">100%</div>
<div class="cell" style="left:1502.5px;top:1402px;color:#0c0c0c;font-weight:normal;">03/18/26</div>
<div class="cell" style="left:1634px;top:1402px;color:#0c0c0c;font-weight:normal;">04/02/26</div>
<div class="a" style="left:226px;top:1526px;width:2228px;height:2px;background:#dcdcdc"></div>
<div class="rn" style="top:1489px">19</div>
<div class="cb" style="top:1486px"></div>
<svg class="a" style="left:557px;top:1484px" width="25" height="31" viewBox="0 0 25 31"><rect x="1" y="0" width="2" height="31" fill="#c4c4c4"/><path d="M3 2.5 H22 L17.5 10 L22 17.5 H3" fill="none" stroke="#c4c4c4" stroke-width="1.8" stroke-linejoin="miter"/></svg>
<div class="cell" style="left:728px;top:1484px;color:#111;font-weight:normal;">Cooling System Installation</div>
<div class="cell" style="left:1134.5px;top:1484px">Tommy Turner</div>
<div class="cell" style="left:1319px;width:156.3px;text-align:right;top:1484px;color:#0c0c0c;font-weight:normal;">100%</div>
<div class="cell" style="left:1502.5px;top:1484px;color:#0c0c0c;font-weight:normal;">03/18/26</div>
<div class="cell" style="left:1634px;top:1484px;color:#0c0c0c;font-weight:normal;">04/01/26</div>
<div class="a" style="left:226px;top:1608px;width:2228px;height:2px;background:#dcdcdc"></div>
<div class="rn" style="top:1539px">20</div>
<div class="cb" style="top:1536px"></div>
<svg class="a" style="left:557px;top:1534px" width="25" height="31" viewBox="0 0 25 31"><rect x="1" y="0" width="2" height="31" fill="#c4c4c4"/><path d="M3 2.5 H22 L17.5 10 L22 17.5 H3" fill="none" stroke="#c4c4c4" stroke-width="1.8" stroke-linejoin="miter"/></svg>
<div class="cell" style="left:728px;top:1534px;color:#111;font-weight:normal;">Network Infrastructure<br>Installation</div>
<div class="cell" style="left:1134.5px;top:1534px">Tommy Turner</div>
<div class="cell" style="left:1319px;width:156.3px;text-align:right;top:1534px;color:#0c0c0c;font-weight:normal;">65%</div>
<div class="cell" style="left:1502.5px;top:1534px;color:#0c0c0c;font-weight:normal;">04/03/26</div>
<div class="cell" style="left:1634px;top:1534px;color:#0c0c0c;font-weight:normal;">04/16/26</div>
<div class="vl" style="left:518px;top:322px;height:1283px"></div>
<div class="vl" style="left:616px;top:322px;height:1283px"></div>
<div class="vl" style="left:1120px;top:322px;height:1283px"></div>
<div class="vl" style="left:1318px;top:322px;height:1283px"></div>
<div class="vl" style="left:1488px;top:322px;height:1283px"></div>
<div class="vl" style="left:1620px;top:322px;height:1283px"></div>
<svg class="a" style="left:1482px;top:361px" width="6" height="8" viewBox="0 0 6 8"><path d="M0 0 L5.5 4 L0 8Z" fill="#5a5a5a"/></svg>
<div class="a" style="left:357px;top:321px;width:163px;height:51px;border:3px solid #6a9ad8"></div>
<div class="a" style="left:514px;top:366px;width:8px;height:8px;background:#6a9ad8"></div>
<div class="a" style="left:178px;top:1602px;width:180px;height:32px;background:#f7f6f4"></div>
<div class="a" style="left:358px;top:1605px;width:1393px;height:29px;background:#fff"></div>
<div class="a" style="left:226px;top:1602px;width:132px;height:3px;background:#f7f6f4"></div>
<div class="a" style="left:364px;top:1614px;width:788px;height:16px;border-radius:8px;background:#9e9e9e"></div>
<div class="t" style="left:2064.8px;top:216.7px;font-size:28.01px;line-height:28.01px;letter-spacing:-1.55px;font-weight:700;color:#3a3a3a;">Feb</div>
<div class="t" style="left:1709px;width:200px;text-align:center;top:255.8px;font-size:27.14px;line-height:27.14px;letter-spacing:0.14px;color:#3a3a3a">Jan 25</div>
<div class="t" style="left:1821px;width:200px;text-align:center;top:255.8px;font-size:27.14px;line-height:27.14px;letter-spacing:0.14px;color:#3a3a3a">Feb 1</div>
<div class="t" style="left:1933px;width:200px;text-align:center;top:255.8px;font-size:27.14px;line-height:27.14px;letter-spacing:0.14px;color:#3a3a3a">Feb 8</div>
<div class="t" style="left:2045px;width:200px;text-align:center;top:255.8px;font-size:27.14px;line-height:27.14px;letter-spacing:0.14px;color:#3a3a3a">Feb 15</div>
<div class="t" style="left:2157px;width:200px;text-align:center;top:255.8px;font-size:27.14px;line-height:27.14px;letter-spacing:0.14px;color:#3a3a3a">Feb 22</div>
<div class="t" style="left:2269px;width:200px;text-align:center;top:255.8px;font-size:27.14px;line-height:27.14px;letter-spacing:0.14px;color:#3a3a3a">Mar 1</div>
<div class="t" style="left:2444.5px;top:255.8px;font-size:27.14px;line-height:27.14px;letter-spacing:0.14px;color:#3a3a3a;width:37px;overflow:hidden">Mar 8</div>
<div class="a" style="left:1864px;top:280px;width:2px;height:38px;background:#d0d0d0"></div>
<div class="a" style="left:2312px;top:280px;width:2px;height:38px;background:#d0d0d0"></div>
<svg class="a" style="left:2455px;top:297px" width="17" height="17" viewBox="0 0 17 17"><path d="M2 2 L15 15 M15 2 L2 15" stroke="#333" stroke-width="3"/></svg>
<div class="a" style="left:1864px;top:322px;width:2px;height:1283px;background:#d4d4d4;z-index:1"></div>
<div class="a" style="left:1976px;top:322px;width:2px;height:1283px;background:#f3f2f0;z-index:1"></div>
<div class="a" style="left:2088px;top:322px;width:2px;height:1283px;background:#f3f2f0;z-index:1"></div>
<div class="a" style="left:2200px;top:322px;width:2px;height:1283px;background:#f3f2f0;z-index:1"></div>
<div class="a" style="left:2312px;top:322px;width:2px;height:1283px;background:#d4d4d4;z-index:1"></div>
<div class="a" style="left:2424px;top:322px;width:2px;height:1283px;background:#f3f2f0;z-index:1"></div>
<div class="a" style="left:1754px;top:322px;width:700px;height:48px;background:#18317a;z-index:1"></div>
<div class="a" style="left:1754px;top:370px;width:700px;height:2px;background:#f3efe8;z-index:1"></div>
<div class="a" style="left:1754px;top:372px;width:700px;height:48px;background:#74acee;z-index:1"></div>
<div class="a" style="left:1754px;top:818px;width:700px;height:48px;background:#74acee;z-index:1"></div>
<div class="a" style="left:1754px;top:1296px;width:700px;height:48px;background:#74acee;z-index:1"></div>
<div class="a" style="left:1750px;top:206px;width:4px;height:1428px;background:#c4c4c4;z-index:3"></div>
<div class="a" style="left:1754px;top:206px;width:6px;height:1428px;background:linear-gradient(90deg,rgba(0,0,0,0.06),rgba(0,0,0,0));z-index:3"></div>
<div class="a" style="z-index:2;left:1866px;top:332px;width:588px;height:22px;background:#cfcfcf;border-top:2px solid #9f9f9f;border-bottom:2px solid #9f9f9f;border-left:2px solid #9f9f9f;"></div>
<div class="a" style="z-index:2;left:1868px;top:336px;width:586px;height:14px;background:#e4e4e4;border-top:2px solid #a3a3a3;border-bottom:2px solid #a3a3a3"></div>
<svg class="a" style="z-index:2;left:1866px;top:353px" width="11" height="14" viewBox="0 0 11 14"><path d="M1 0 H10 L1 13Z" fill="#cfcfcf" stroke="#9f9f9f" stroke-width="1.6"/></svg>
<div class="a" style="z-index:2;left:1866px;top:382px;width:256px;height:22px;background:#cfcfcf;border-top:2px solid #9f9f9f;border-bottom:2px solid #9f9f9f;border-left:2px solid #9f9f9f;border-right:2px solid #9f9f9f;"></div>
<div class="a" style="z-index:2;left:1868px;top:386px;width:252px;height:14px;background:#e4e4e4;border-top:2px solid #a3a3a3;border-bottom:2px solid #a3a3a3"></div>
<svg class="a" style="z-index:2;left:1866px;top:403px" width="11" height="14" viewBox="0 0 11 14"><path d="M1 0 H10 L1 13Z" fill="#cfcfcf" stroke="#9f9f9f" stroke-width="1.6"/></svg>
<svg class="a" style="z-index:2;left:2111px;top:403px" width="11" height="14" viewBox="0 0 11 14"><path d="M10 0 H1 L10 13Z" fill="#cfcfcf" stroke="#9f9f9f" stroke-width="1.6"/></svg>
<div class="gl" style="z-index:2;left:2133px;top:381px">Planning</div>
<div class="a" style="z-index:2;left:2122px;top:828px;width:332px;height:22px;background:#cfcfcf;border-top:2px solid #9f9f9f;border-bottom:2px solid #9f9f9f;border-left:2px solid #9f9f9f;"></div>
<div class="a" style="z-index:2;left:2124px;top:832px;width:330px;height:14px;background:#e4e4e4;border-top:2px solid #a3a3a3;border-bottom:2px solid #a3a3a3"></div>
<svg class="a" style="z-index:2;left:2122px;top:849px" width="11" height="14" viewBox="0 0 11 14"><path d="M1 0 H10 L1 13Z" fill="#cfcfcf" stroke="#9f9f9f" stroke-width="1.6"/></svg>
<div class="a" style="z-index:2;left:2138px;top:1306px;width:316px;height:22px;background:#cfcfcf;border-top:2px solid #9f9f9f;border-bottom:2px solid #9f9f9f;border-left:2px solid #9f9f9f;"></div>
<div class="a" style="z-index:2;left:2140px;top:1310px;width:314px;height:14px;background:#e4e4e4;border-top:2px solid #a3a3a3;border-bottom:2px solid #a3a3a3"></div>
<svg class="a" style="z-index:2;left:2138px;top:1327px" width="11" height="14" viewBox="0 0 11 14"><path d="M1 0 H10 L1 13Z" fill="#cfcfcf" stroke="#9f9f9f" stroke-width="1.6"/></svg>
<div class="a" style="z-index:2;left:1866px;top:432px;width:16px;height:28px;background:#cce3f6;border:2px solid #bdbdbd;"></div>
<div class="a" style="z-index:2;left:1868px;top:438px;width:12px;height:16px;background:#e3f1fa;border-top:2px solid #9fb0bc;border-bottom:2px solid #9fb0bc;border-right:2px solid #9fb0bc"></div>
<div class="gl" style="z-index:2;left:1893px;top:430px">Project Kickoff Meeting</div>
<div class="a" style="z-index:2;left:1882px;top:482px;width:32px;height:28px;background:#cce3f6;border:2px solid #bdbdbd;"></div>
<div class="a" style="z-index:2;left:1884px;top:488px;width:28px;height:16px;background:#e3f1fa;border-top:2px solid #9fb0bc;border-bottom:2px solid #9fb0bc;border-right:2px solid #9fb0bc"></div>
<div class="gl" style="z-index:2;left:1925px;top:480px">Requirements Gathering</div>
<div class="a" style="z-index:2;left:1914px;top:564px;width:32px;height:28px;background:#cce3f6;border:2px solid #bdbdbd;"></div>
<div class="a" style="z-index:2;left:1916px;top:570px;width:28px;height:16px;background:#e3f1fa;border-top:2px solid #9fb0bc;border-bottom:2px solid #9fb0bc;border-right:2px solid #9fb0bc"></div>
<div class="gl" style="z-index:2;left:1957px;top:562px">Site Assessment - ASH3</div>
<div class="a" style="z-index:2;left:1946px;top:646px;width:80px;height:28px;background:#cce3f6;border:2px solid #bdbdbd;"></div>
<div class="a" style="z-index:2;left:1948px;top:652px;width:76px;height:16px;background:#e3f1fa;border-top:2px solid #9fb0bc;border-bottom:2px solid #9fb0bc;border-right:2px solid #9fb0bc"></div>
<div class="gl" style="z-index:2;left:2037px;top:644px">Technical Design Review</div>
<div class="a" style="z-index:2;left:2026px;top:728px;width:48px;height:28px;background:#cce3f6;border:2px solid #bdbdbd;"></div>
<div class="a" style="z-index:2;left:2028px;top:734px;width:44px;height:16px;background:#e3f1fa;border-top:2px solid #9fb0bc;border-bottom:2px solid #9fb0bc;border-right:2px solid #9fb0bc"></div>
<div class="gl" style="z-index:2;left:2085px;top:726px">Customer Design Approval</div>
<div class="a" style="z-index:2;left:2106px;top:778px;width:16px;height:28px;background:#cce3f6;border:2px solid #bdbdbd;"></div>
<div class="a" style="z-index:2;left:2108px;top:784px;width:12px;height:16px;background:#e3f1fa;border-top:2px solid #9fb0bc;border-bottom:2px solid #9fb0bc;border-right:2px solid #9fb0bc"></div>
<div class="gl" style="z-index:2;left:2133px;top:776px">Budget and Timeline Approval</div>
<div class="a" style="z-index:2;left:2122px;top:878px;width:16px;height:28px;background:#cce3f6;border:2px solid #bdbdbd;"></div>
<div class="a" style="z-index:2;left:2124px;top:884px;width:12px;height:16px;background:#e3f1fa;border-top:2px solid #9fb0bc;border-bottom:2px solid #9fb0bc;border-right:2px solid #9fb0bc"></div>
<div class="gl" style="z-index:2;left:2149px;top:876px">Power Distribution Equipment Order</div>
<div class="a" style="z-index:2;left:2122px;top:960px;width:16px;height:28px;background:#cce3f6;border:2px solid #bdbdbd;"></div>
<div class="a" style="z-index:2;left:2124px;top:966px;width:12px;height:16px;background:#e3f1fa;border-top:2px solid #9fb0bc;border-bottom:2px solid #9fb0bc;border-right:2px solid #9fb0bc"></div>
<div class="gl" style="z-index:2;left:2149px;top:958px">Cooling Infrastructure Order</div>
<div class="a" style="z-index:2;left:2122px;top:1010px;width:16px;height:28px;background:#cce3f6;border:2px solid #bdbdbd;"></div>
<div class="a" style="z-index:2;left:2124px;top:1016px;width:12px;height:16px;background:#e3f1fa;border-top:2px solid #9fb0bc;border-bottom:2px solid #9fb0bc;border-right:2px solid #9fb0bc"></div>
<div class="gl" style="z-index:2;left:2149px;top:1008px">Network Equipment Order</div>
<div class="a" style="z-index:2;left:2122px;top:1060px;width:16px;height:28px;background:#cce3f6;border:2px solid #bdbdbd;"></div>
<div class="a" style="z-index:2;left:2124px;top:1066px;width:12px;height:16px;background:#e3f1fa;border-top:2px solid #9fb0bc;border-bottom:2px solid #9fb0bc;border-right:2px solid #9fb0bc"></div>
<div class="gl" style="z-index:2;left:2149px;top:1058px">Cage and Security Hardware</div>
<div class="a" style="z-index:2;left:2138px;top:1142px;width:316px;height:28px;background:#cce3f6;border:2px solid #bdbdbd;border-right:none;"></div>
<div class="a" style="z-index:2;left:2140px;top:1148px;width:299px;height:16px;background:#e3f1fa;border-top:2px solid #9fb0bc;border-bottom:2px solid #9fb0bc;border-right:2px solid #9fb0bc"></div>
<div class="a" style="z-index:2;left:2138px;top:1356px;width:240px;height:28px;background:#cce3f6;border:2px solid #bdbdbd;"></div>
<div class="a" style="z-index:2;left:2140px;top:1362px;width:236px;height:16px;background:#e3f1fa;border-top:2px solid #9fb0bc;border-bottom:2px solid #9fb0bc;border-right:2px solid #9fb0bc"></div>
<div class="gl" style="z-index:2;left:2389px;top:1354px">Cage Construction</div>
<div class="a" style="z-index:2;left:1882px;top:454px;width:8px;height:2px;background:#3b3b3b"></div>
<div class="a" style="z-index:2;left:1888px;top:454px;width:2px;height:23px;background:#3b3b3b"></div>
<svg class="a" style="z-index:2;left:1884px;top:472px" width="10" height="6" viewBox="0 0 10 6"><path d="M0 0 H10 V2 L7 4 V5 H3 V4 L0 2Z" fill="#3b3b3b"/></svg>
<div class="a" style="z-index:2;left:1914px;top:504px;width:8px;height:2px;background:#3b3b3b"></div>
<div class="a" style="z-index:2;left:1920px;top:504px;width:2px;height:55px;background:#3b3b3b"></div>
<svg class="a" style="z-index:2;left:1916px;top:554px" width="10" height="6" viewBox="0 0 10 6"><path d="M0 0 H10 V2 L7 4 V5 H3 V4 L0 2Z" fill="#3b3b3b"/></svg>
<div class="a" style="z-index:2;left:1946px;top:586px;width:8px;height:2px;background:#3b3b3b"></div>
<div class="a" style="z-index:2;left:1952px;top:586px;width:2px;height:55px;background:#3b3b3b"></div>
<svg class="a" style="z-index:2;left:1948px;top:636px" width="10" height="6" viewBox="0 0 10 6"><path d="M0 0 H10 V2 L7 4 V5 H3 V4 L0 2Z" fill="#3b3b3b"/></svg>
<div class="a" style="z-index:2;left:2026px;top:668px;width:8px;height:2px;background:#3b3b3b"></div>
<div class="a" style="z-index:2;left:2032px;top:668px;width:2px;height:55px;background:#3b3b3b"></div>
<svg class="a" style="z-index:2;left:2028px;top:718px" width="10" height="6" viewBox="0 0 10 6"><path d="M0 0 H10 V2 L7 4 V5 H3 V4 L0 2Z" fill="#3b3b3b"/></svg>
<div class="a" style="z-index:2;left:2074px;top:750px;width:40px;height:2px;background:#3b3b3b"></div>
<div class="a" style="z-index:2;left:2112px;top:750px;width:2px;height:23px;background:#3b3b3b"></div>
<svg class="a" style="z-index:2;left:2108px;top:768px" width="10" height="6" viewBox="0 0 10 6"><path d="M0 0 H10 V2 L7 4 V5 H3 V4 L0 2Z" fill="#3b3b3b"/></svg>
<div class="a" style="z-index:2;left:2122px;top:800px;width:8px;height:2px;background:#3b3b3b"></div>
<div class="a" style="z-index:2;left:2128px;top:800px;width:2px;height:255px;background:#3b3b3b"></div>
<svg class="a" style="z-index:2;left:2124px;top:868px" width="10" height="6" viewBox="0 0 10 6"><path d="M0 0 H10 V2 L7 4 V5 H3 V4 L0 2Z" fill="#3b3b3b"/></svg>
<svg class="a" style="z-index:2;left:2124px;top:950px" width="10" height="6" viewBox="0 0 10 6"><path d="M0 0 H10 V2 L7 4 V5 H3 V4 L0 2Z" fill="#3b3b3b"/></svg>
<svg class="a" style="z-index:2;left:2124px;top:1000px" width="10" height="6" viewBox="0 0 10 6"><path d="M0 0 H10 V2 L7 4 V5 H3 V4 L0 2Z" fill="#3b3b3b"/></svg>
<svg class="a" style="z-index:2;left:2124px;top:1050px" width="10" height="6" viewBox="0 0 10 6"><path d="M0 0 H10 V2 L7 4 V5 H3 V4 L0 2Z" fill="#3b3b3b"/></svg>
<div class="a" style="z-index:2;left:2137px;top:900px;width:9px;height:2px;background:#3b3b3b"></div>
<div class="a" style="z-index:2;left:2137px;top:982px;width:9px;height:2px;background:#3b3b3b"></div>
<div class="a" style="z-index:2;left:2137px;top:1032px;width:9px;height:2px;background:#3b3b3b"></div>
<div class="a" style="z-index:2;left:2137px;top:1082px;width:9px;height:2px;background:#3b3b3b"></div>
<div class="a" style="z-index:2;left:2144px;top:900px;width:2px;height:451px;background:#3b3b3b"></div>
<svg class="a" style="z-index:2;left:2140px;top:1132px" width="10" height="6" viewBox="0 0 10 6"><path d="M0 0 H10 V2 L7 4 V5 H3 V4 L0 2Z" fill="#3b3b3b"/></svg>
<svg class="a" style="z-index:2;left:2140px;top:1346px" width="10" height="6" viewBox="0 0 10 6"><path d="M0 0 H10 V2 L7 4 V5 H3 V4 L0 2Z" fill="#3b3b3b"/></svg>
<div class="a" style="left:2454px;top:322px;width:31px;height:1312px;background:#fff;z-index:4"></div>
<div class="a" style="left:2462px;top:329px;width:16px;height:558px;border-radius:8px;background:#a0a0a0;z-index:5"></div>
<div class="a" style="left:1754px;top:1605px;width:731px;height:29px;background:#fff;z-index:4"></div>
<div class="a" style="left:1761px;top:1614px;width:138px;height:16px;border-radius:8px;background:#a0a0a0;z-index:5"></div>
<div class="a" style="left:2485px;top:190px;width:101px;height:1444px;background:#fff;border-left:2px solid #e2e2e2;z-index:6"></div>
<svg class="a" style="z-index:7;left:0;top:0" width="2586" height="1634" viewBox="0 0 2586 1634">
<g fill="none" stroke="#3d3d3d" stroke-width="2.8" stroke-linejoin="round" stroke-linecap="round">
<path d="M2519.7 227.6 H2556.1 V254 H2534 L2527.6 259 V254 H2519.7Z"/>
<path d="M2537.1 349.8 L2533.6 353.5 A8.3 8.3 0 0 1 2521.9 341.8 L2540.7 324 A8.3 8.3 0 0 1 2552.4 335.7 L2543.8 344.3 A4.5 4.5 0 0 1 2537.4 337.9 L2544.5 330.8"/>
<path d="M2528.5 415.3 H2547.5 M2525.5 421.6 H2550.5"/>
<path d="M2519.7 427.5 H2556 V443 Q2556 452 2547 452 H2519.7Z M2547 452 V443 H2556"/>
<path d="M2552 511 H2519.8 V547.6 H2551"/>
<path d="M2554.4 511 V535"/>
<path d="M2540.7 641.8 A16 16 0 0 1 2526.9 614.7 M2535.2 610 A16 16 0 0 1 2549.5 637.3"/><path d="M2519.9 613.7 L2527 612 L2529.4 619.8 M2546.2 631.8 L2548.2 639.3 L2555.4 637.6"/>
<path d="M2532.2 626.3 L2536.3 630.7 L2543.8 622.9"/>
<path d="M2523.8 703.4 H2540.5 L2552.7 715.6 V739.4 H2523.8Z M2540.5 703.4 V715.6 H2552.7"/>
<path d="M2538.2 735 V722 M2533 727 L2538.2 721.8 L2543.4 727"/>
<circle cx="2538" cy="817.7" r="18.2"/>
<path d="M2525 818 H2531.5 L2535 811 L2540.5 825 L2544 818 H2551"/>
<path d="M2534 896.4 H2556 V920 Q2556 931.4 2545 931.4 H2528.2 V927"/>
<path d="M2545 931.4 V921.3 H2556"/>
<rect x="2520.2" y="902" width="13.4" height="23.6" rx="1"/>
<path d="M2527 907.5 H2529.5 M2527 913.5 H2529.5 M2527 919.5 H2529.5"/>
<circle cx="2529" cy="1001.3" r="4.6"/>
<path d="M2520.5 1023 Q2521 1013 2534.5 1012.8"/>
<rect x="2540.9" y="1000.4" width="15.1" height="4.6"/>
<rect x="2540.9" y="1014.2" width="11.4" height="4.6"/>
<rect x="2519.7" y="1087.6" width="36.3" height="36.3" rx="1"/>
<path d="M2528.7 1104 V1116 M2534.9 1094.5 V1116 M2541 1099.6 V1116 M2547.1 1107 V1116"/>
</g>
<path d="M2549.3 535 H2559.5 L2554.4 541.5Z" fill="#3d3d3d"/>
<text x="2529.3" y="539.4" font-family="Liberation Sans" font-weight="bold" font-size="29" textLength="15.5" lengthAdjust="spacingAndGlyphs" fill="#3d3d3d">B</text>
<g fill="none" stroke="#1e1e1e" stroke-width="2.6" stroke-linecap="round" stroke-linejoin="round"><path d="M2518.6 1221 L2523.9 1215.6 M2528.1 1200.5 L2538.9 1211.3 L2534.4 1215.7 A7.6 7.6 0 0 1 2523.6 1204.9 Z M2531.1 1202 L2534.9 1197.9 M2538 1208.5 L2542.1 1204.4 M2536.6 1192.4 L2547.5 1203.3 L2551.7 1199.1 A7.7 7.7 0 0 0 2540.8 1188.2 Z M2551.6 1188 L2557.3 1182.6"/></g>
<path d="M2533.1 1286.0 Q2537.832 1297.952 2550.0 1302.6 Q2537.832 1307.2479999999998 2533.1 1319.1999999999998 Q2528.368 1307.2479999999998 2516.2 1302.6 Q2528.368 1297.952 2533.1 1286.0Z" fill="#444"/>
<path d="M2551 1274.3 Q2553.912 1281.716 2561.4 1284.6 Q2553.912 1287.484 2551 1294.8999999999999 Q2548.088 1287.484 2540.6 1284.6 Q2548.088 1281.716 2551 1274.3Z" fill="#444"/>
<g fill="none" stroke="#111" stroke-width="2.2">
<path d="M2516 1393.8 Q2538 1371 2560 1393.8 Q2538 1416.6 2516 1393.8Z"/>
<circle cx="2537.6" cy="1392.4" r="10.2"/>
</g>
<circle cx="2537.6" cy="1392.4" r="4.8" fill="#111"/>
</svg>
<div class="a" style="left:338px;top:426px;width:158px;height:64px;background:#eaf4fb;border:2px solid #93c4ea;border-radius:4px;box-shadow:0 2px 8px rgba(0,0,0,0.25);z-index:8"></div>
<div class="t" style="left:352.7px;top:446.0px;font-size:24.86px;line-height:24.86px;letter-spacing:-0.014px;font-weight:700;color:#444;z-index:9;">Row Menu</div>
<svg class="a" style="left:0;top:1614px;z-index:20" width="2586" height="20" viewBox="0 1614 2586 20"><path d="M0 1627.5 Q2.5 1632 7.5 1634 H0Z M2586 1627.5 Q2583.5 1632 2578.5 1634 H2586Z" fill="#161616"/></svg>
</body></html>
